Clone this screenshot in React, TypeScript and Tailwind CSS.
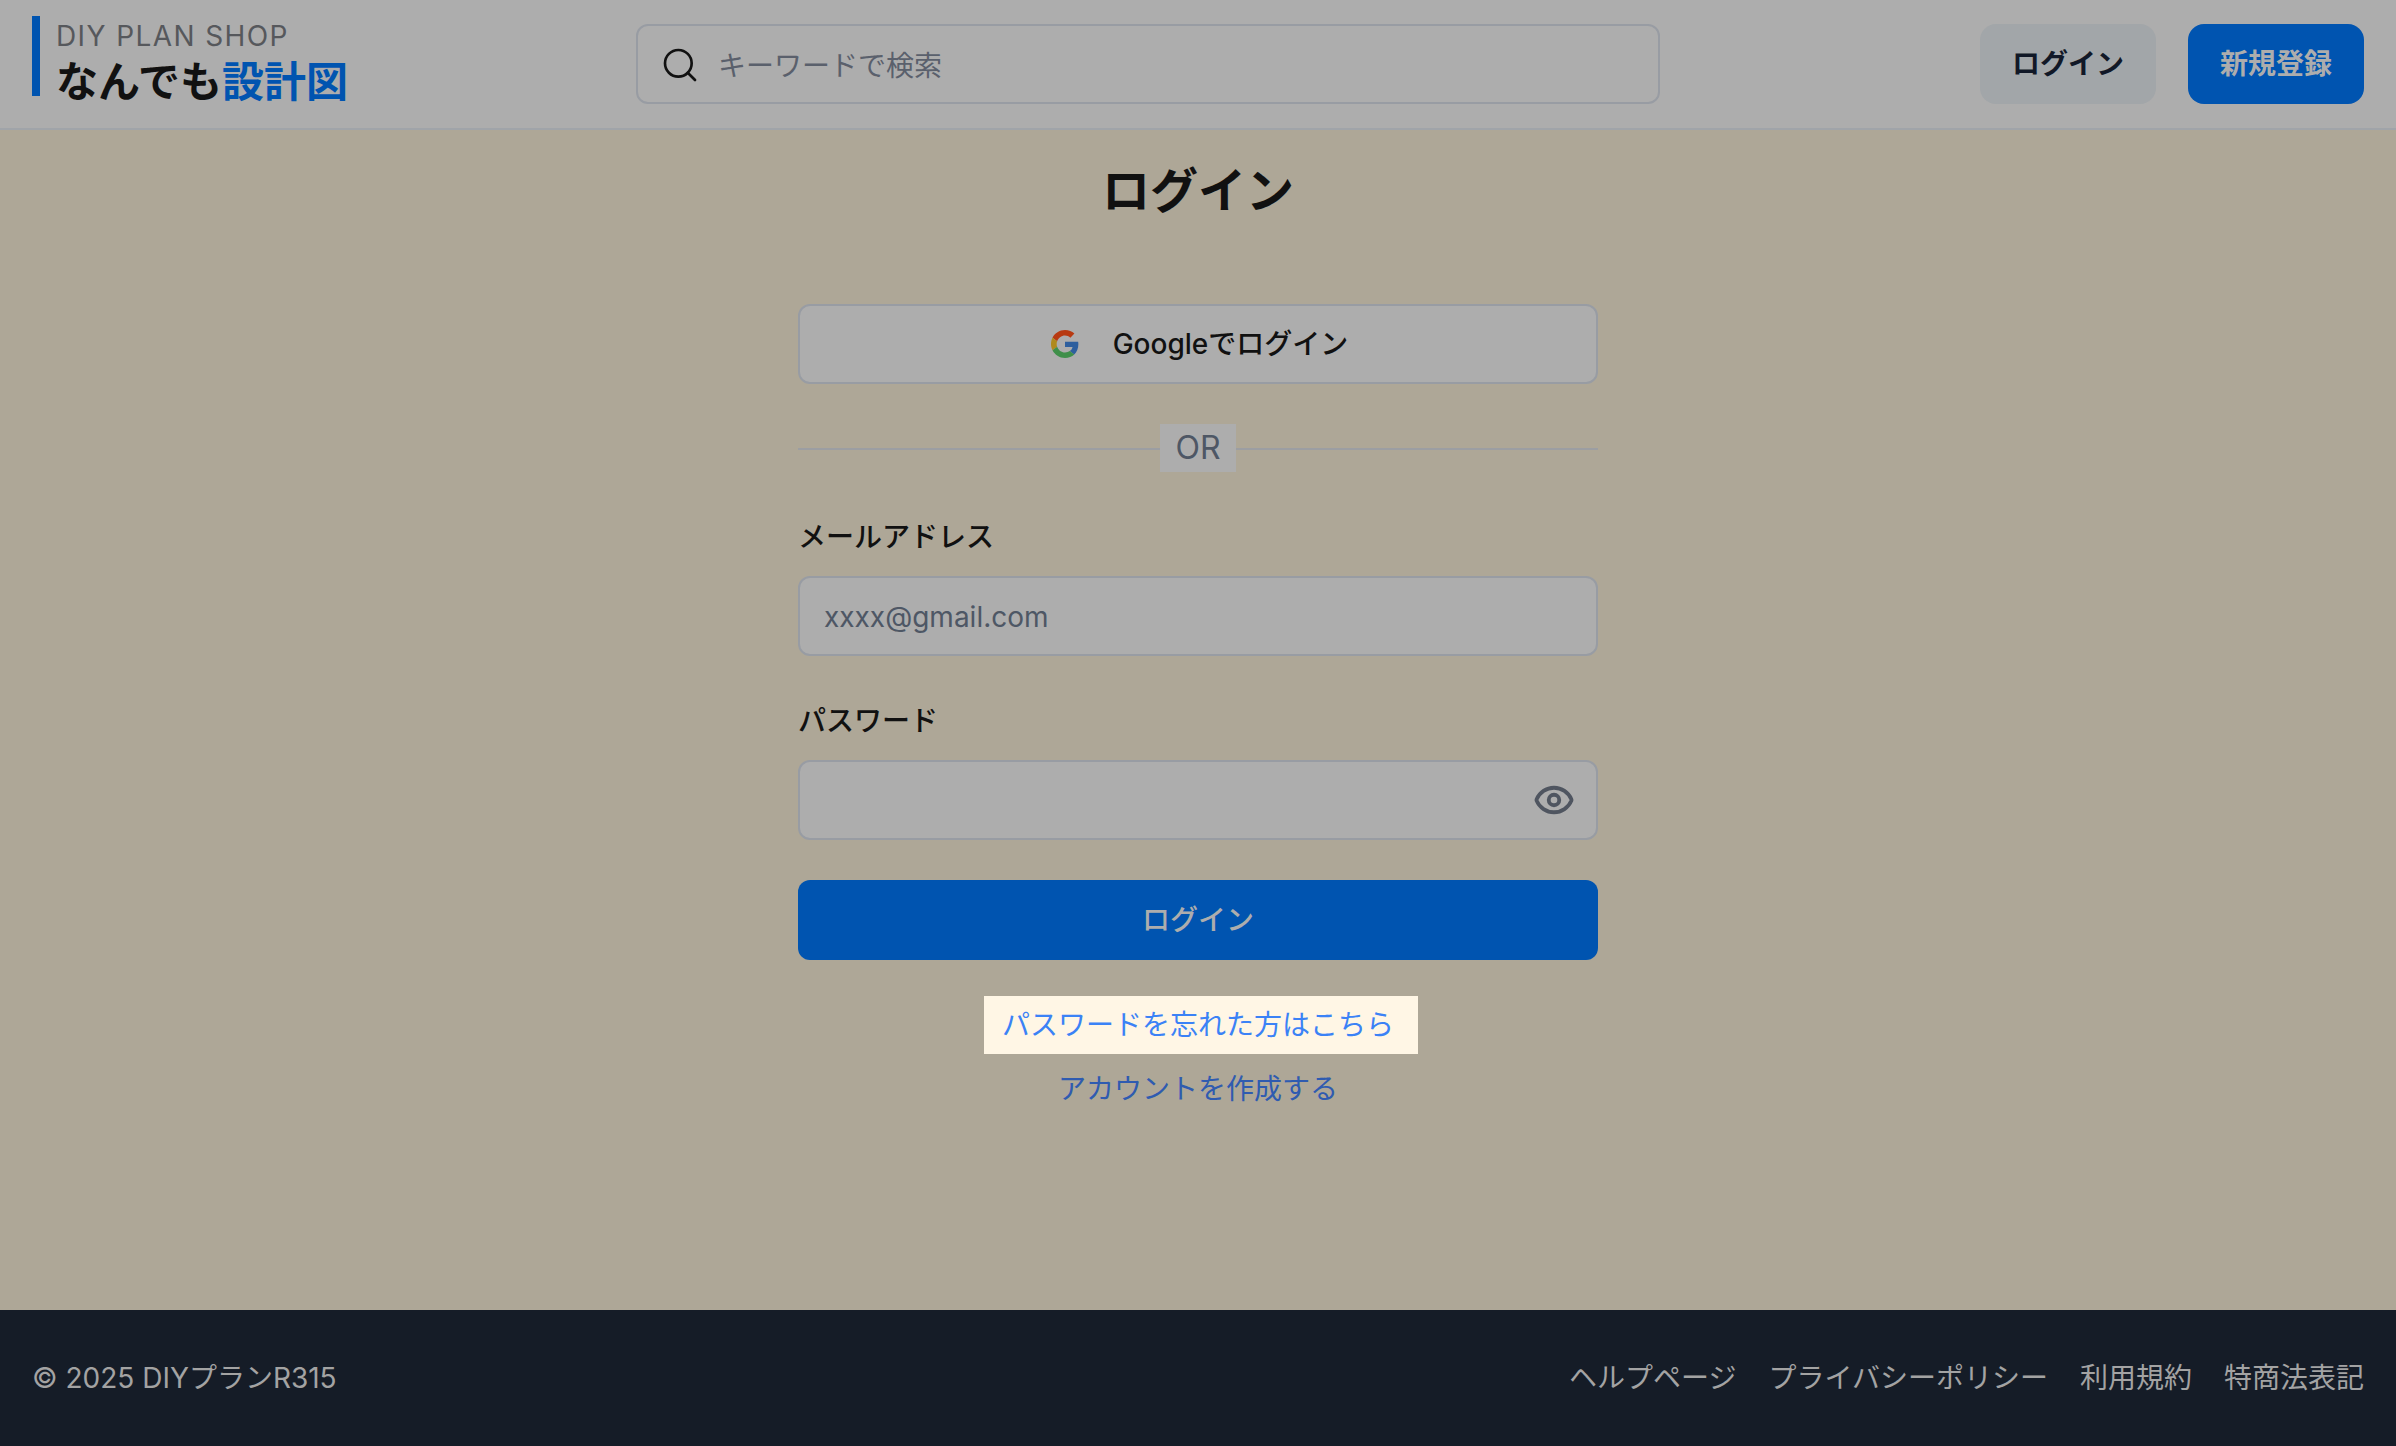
import { Eye, Search } from 'lucide-react';

const fontStack = "font-['Inter','Noto_Sans_CJK_JP',sans-serif]";

function GoogleLogo() {
    return (
        <svg width="28" height="28" viewBox="0 0 48 48">
            <path fill="#b83a12" d="M24 9.5c3.5 0 6.7 1.200 9.200 3.600l6.900-6.900C35.900 2.400 30.500 0 24 0 14.600 0 6.500 5.400 2.600 13.200l8 6.200C12.500 13.700 17.800 9.500 24 9.500z" />
            <path fill="#2e5f9e" d="M46.900 24.500c0-1.600-.1-3.100-.4-4.500H24v9h12.900c-.6 3-2.200 5.500-4.800 7.200l7.700 6c4.500-4.200 7.100-10.300 7.100-17.700z" />
            <path fill="#b08a1c" d="M10.500 28.600c-.5-1.400-.8-3-.8-4.600s.3-3.200.8-4.600l-8-6.200C.9 16.500 0 20.100 0 24s.9 7.500 2.600 10.800l7.900-6.200z" />
            <path fill="#3f8f4a" d="M24 48c6.500 0 11.900-2.100 15.900-5.800l-7.700-6c-2.200 1.400-4.900 2.300-8.200 2.300-6.200 0-11.500-4.200-13.400-9.900l-8 6.200C6.500 42.600 14.600 48 24 48z" />
        </svg>
    );
}

function Header() {
    return (
        <header className="h-[130px] shrink-0 flex items-center justify-between px-8 bg-[#adadad] border-b-2 border-[#a0a4a9]">
            <div className="w-[604px] self-start mt-4">
                <div className="border-l-8 border-[#0054b0] pl-4 h-20">
                    <p className="pt-[2px] text-[28px] leading-[36px] tracking-[0.05em] text-[#56585c]">DIY PLAN SHOP</p>
                    <p className="mt-[3px] text-[42px] leading-[50px] font-bold text-[#111111]">
                        なんでも<span className="text-[#0054b0]">設計図</span>
                    </p>
                </div>
            </div>
            <div className="flex-1 h-20 flex items-center gap-[18px] pl-[22px] pr-6 rounded-xl border-2 border-[#989ca3] bg-[#adadad]">
                <Search size={40} strokeWidth={1.6} className="text-[#111111] shrink-0 mt-[2px]" />
                <input
                    placeholder="キーワードで検索"
                    className="flex-1 pt-[3px] outline-none bg-transparent text-[28px] placeholder:text-[#5a606c]"
                />
            </div>
            <div className="w-[704px] flex justify-end gap-8">
                <button className="w-44 h-20 rounded-2xl bg-[#a2a6a9] text-[28px] font-bold text-[#111827]">ログイン</button>
                <button className="w-44 h-20 rounded-2xl bg-[#0054b0] text-[28px] font-bold text-[#adadad]">新規登録</button>
            </div>
        </header>
    );
}

function LoginForm() {
    return (
        <main className="flex-1 bg-[#aea797] flex flex-col items-center">
            <h1 className="mt-[25px] text-[48px] leading-[72px] font-bold text-[#111111]">ログイン</h1>

            <div className="w-[800px] mt-[77px]">
                <button className="w-full h-20 pl-[3px] flex items-center justify-center gap-[34px] rounded-xl border-2 border-[#989ca3] bg-[#adadad] text-[28px] font-medium text-[#111111]">
                    <GoogleLogo />
                    Googleでログイン
                </button>

                {/* OR divider */}
                <div className="relative mt-10 h-12 flex items-center justify-center">
                    <div className="absolute inset-x-0 top-[24px] h-0.5 bg-[#9c9ea2]" />
                    <span className="relative w-[76px] h-12 flex items-center justify-center bg-[#adadad] text-[32px] text-[#4e5765]">OR</span>
                </div>

                <label className="block mt-[44px] mb-[18px] pt-[1px] text-[28px] leading-[41px] font-medium text-[#111111]">メールアドレス</label>
                <input
                    placeholder="xxxx@gmail.com"
                    className="w-full h-20 px-6 pt-[2px] rounded-xl border-2 border-[#989ca3] bg-[#adadad] outline-none text-[28px] placeholder:text-[#4e5765]"
                />

                <label className="block mt-[44px] mb-[18px] pt-[1px] text-[28px] leading-[41px] font-medium text-[#111111]">パスワード</label>
                <div className="h-20 flex items-center justify-end pr-[21px] rounded-xl border-2 border-[#989ca3] bg-[#adadad]">
                    <Eye size={42} strokeWidth={2.2} className="text-[#4f5560]" />
                </div>

                <button className="w-full h-20 mt-10 rounded-xl bg-[#0054b0] text-[28px] font-medium text-[#adadad]">ログイン</button>
            </div>

            <a className="mt-9 ml-[6px] h-[58px] pl-[18px] pr-[24px] flex items-center bg-[#fff6e5] text-[28px] text-[#3b82f6]">パスワードを忘れた方はこちら</a>
            <a className="mt-[14px] text-[28px] leading-[42px] text-[#2f5bb0]">アカウントを作成する</a>
        </main>
    );
}

function Footer() {
    const links = ['ヘルプページ', 'プライバシーポリシー', '利用規約', '特商法表記'];
    return (
        <footer className="h-[136px] shrink-0 flex items-center justify-between px-8 bg-[#151c27] text-[28px] text-[#a3a3a3]">
            <p>© 2025 DIYプランR315</p>
            <div className="flex gap-8">
                {links.map((link) => (
                    <a key={link}>{link}</a>
                ))}
            </div>
        </footer>
    );
}

export default function App() {
    return (
        <div className={`min-h-screen flex flex-col ${fontStack}`}>
            <Header />
            <LoginForm />
            <Footer />
        </div>
    );
}
